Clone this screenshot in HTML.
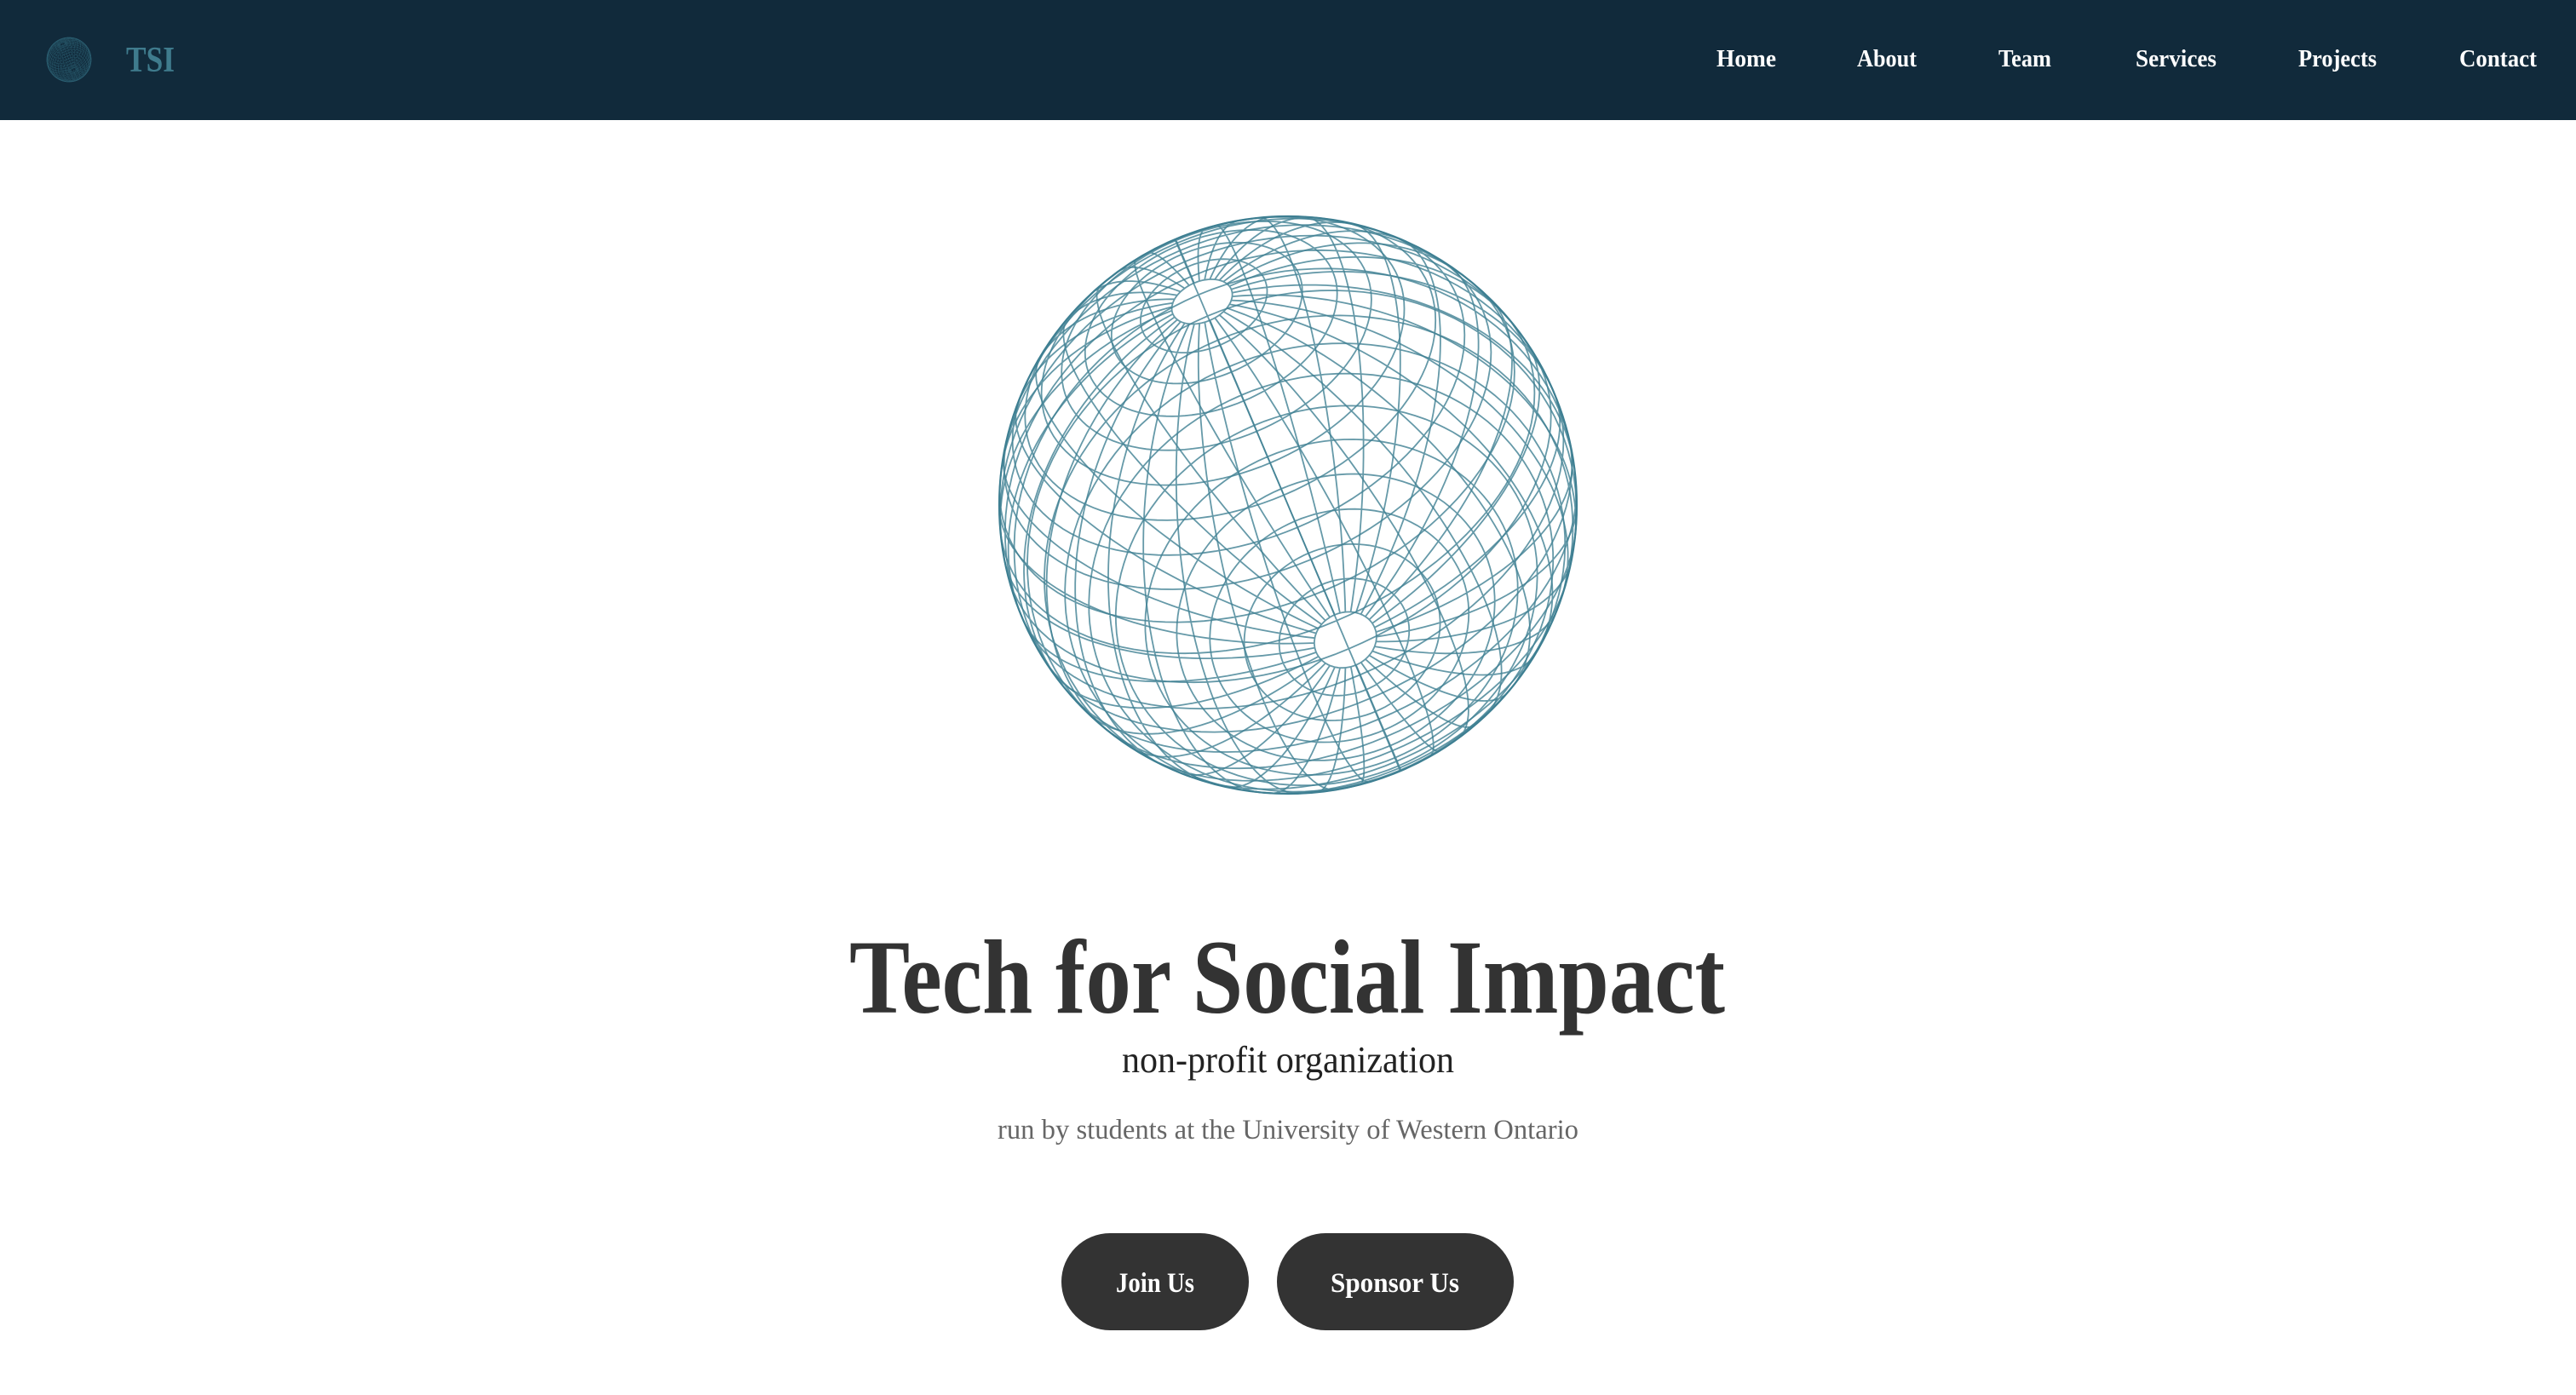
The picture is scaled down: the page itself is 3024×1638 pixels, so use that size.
<!DOCTYPE html>
<html><head><meta charset="utf-8">
<style>
html,body{margin:0;padding:0;background:#fff;width:3024px;height:1638px;overflow:hidden;font-family:"Liberation Serif",serif;}
nav{position:absolute;left:0;top:0;width:3024px;height:141px;background:#112a3b;}
.lnk{position:absolute;top:52px;color:#fff;font-weight:bold;font-size:28px;line-height:36px;white-space:nowrap;transform-origin:0 50%;}
.t{position:absolute;white-space:nowrap;transform-origin:0 0;}
.btn{position:absolute;background:#333;border-radius:60px;}
</style></head><body>
<nav>
<svg id="logo" style="position:absolute;left:54px;top:43px" width="54" height="54" viewBox="-27 -27 54 54"></svg>
<div class="t" id="tsi" style="left:148px;top:46px;font-size:42px;line-height:50px;color:#3f7b8d;font-weight:bold">TSI</div>
<div class="lnk" id="n1" style="left:2015px">Home</div>
<div class="lnk" id="n2" style="left:2180px">About</div>
<div class="lnk" id="n3" style="left:2346px">Team</div>
<div class="lnk" id="n4" style="left:2507px">Services</div>
<div class="lnk" id="n5" style="left:2698px">Projects</div>
<div class="lnk" id="n6" style="left:2887px">Contact</div>
</nav>
<svg id="globe" style="position:absolute;left:1162px;top:243px" width="700" height="700" viewBox="-350 -350 700 700"></svg>
<div class="t" id="title" style="left:997px;top:1078px;font-size:124px;line-height:140px;color:#333;font-weight:bold">Tech for Social Impact</div>
<div class="t" id="sub" style="left:1317px;top:1219px;font-size:44px;line-height:52px;color:#222">non-profit organization</div>
<div class="t" id="run" style="left:1171px;top:1307px;font-size:33px;line-height:40px;color:#666">run by students at the University of Western Ontario</div>
<div class="btn" style="left:1246px;top:1448px;width:220px;height:114px"></div>
<div class="btn" style="left:1499px;top:1448px;width:278px;height:114px"></div>
<div class="t" id="b1" style="left:1310px;top:1487px;font-size:33px;line-height:40px;color:#fff;font-weight:bold">Join Us</div>
<div class="t" id="b2" style="left:1562px;top:1487px;font-size:33px;line-height:40px;color:#fff;font-weight:bold">Sponsor Us</div>
<script>
(function(){
var fits={tsi:57,n1:70,n2:70,n3:62,n4:95,n5:92,n6:91,title:1028,sub:390,run:682,b1:92,b2:151};
for(var id in fits){var e=document.getElementById(id);var w=e.getBoundingClientRect().width;if(w>0)e.style.transform='scaleX('+(fits[id]/w)+')';}
function norm(v){var l=Math.hypot(v[0],v[1],v[2]);return [v[0]/l,v[1]/l,v[2]/l];}
function cross(a,b){return [a[1]*b[2]-a[2]*b[1],a[2]*b[0]-a[0]*b[2],a[0]*b[1]-a[1]*b[0]];}
function mesh(p,R,nl,nm){
 p=norm(p);var u=norm(cross(p,[0,0,1]));if(isNaN(u[0]))u=[1,0,0];var v=cross(p,u);
 var d='';var h=0.11;var pen=false;
 function add(lat,lon){var c=Math.cos(lat),s=Math.sin(lat);var q=[0,1,2].map(function(i){return p[i]*s+c*(Math.cos(lon)*u[i]+Math.sin(lon)*v[i]);});
  if(q[2]<-0.02){pen=false;return;}
  d+=(pen?'L':'M')+(q[0]*R).toFixed(1)+' '+(q[1]*R).toFixed(1);pen=true;}
 for(var i=0;i<=nl;i++){var lat=-Math.PI/2+h+(Math.PI-2*h)*i/nl;pen=false;for(var k=0;k<=120;k++)add(lat,k*Math.PI*2/120);}
 for(var j=0;j<nm;j++){var lon=j*Math.PI*2/nm;pen=false;for(var k=0;k<=80;k++)add(-Math.PI/2+h+(Math.PI-2*h)*k/80,lon);}
 return d;
}
function draw(svg,R,sw,col,op){
 var g=document.getElementById(svg);
 var d1=mesh([-0.30,-0.71,0.64],R,24,36),d2=mesh([0.20,0.47,0.86],R,24,36);
 g.innerHTML='<path d="'+d1+'" fill="none" stroke="'+col+'" stroke-width="'+sw+'" opacity="'+op+'"/><path d="'+d2+'" fill="none" stroke="'+col+'" stroke-width="'+sw+'" opacity="'+op+'"/><circle r="'+R+'" fill="none" stroke="'+col+'" stroke-width="'+(sw*1.2)+'"/>';
}
draw('globe',339,1.8,'#3e7f92',0.8);
draw('logo',26,0.5,'#2d6275',0.6);
})();
</script>
</body></html>
